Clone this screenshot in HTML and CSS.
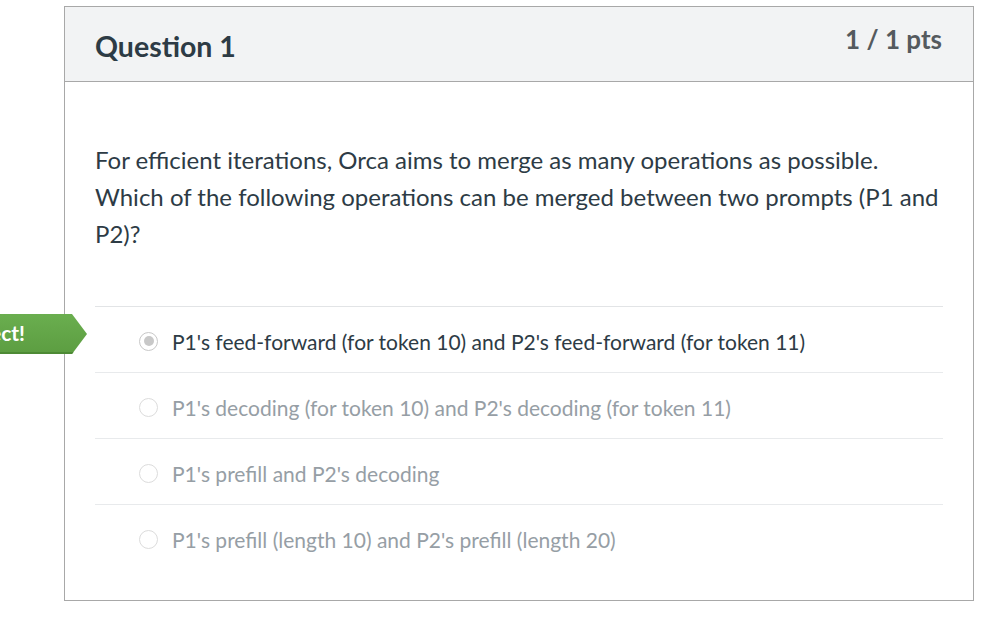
FILE: index.html
```html
<!DOCTYPE html>
<html lang="en">
<head>
<meta charset="utf-8">
<title>Question 1</title>
<link rel="stylesheet" href="styles.css">
</head>
<body>
<div class="page">
  <div class="answer-flag"><span>Correct!</span></div>
  <div class="card">
    <div class="card-header">
      <h2 class="title">Question 1</h2>
      <div class="pts">1 / 1 pts</div>
    </div>
    <div class="card-body">
      <p class="question">For efficient iterations, Orca aims to merge as many operations as possible. Which of the following operations can be merged between two prompts (P1 and P2)?</p>
      <div class="answers">
        <div class="answer selected"><span class="radio"></span><span class="label">P1's feed-forward (for token 10) and P2's feed-forward (for token 11)</span></div>
        <div class="answer"><span class="radio"></span><span class="label">P1's decoding (for token 10) and P2's decoding (for token 11)</span></div>
        <div class="answer"><span class="radio"></span><span class="label">P1's prefill and P2's decoding</span></div>
        <div class="answer"><span class="radio"></span><span class="label">P1's prefill (length 10) and P2's prefill (length 20)</span></div>
      </div>
    </div>
  </div>
</div>
</body>
</html>
```

FILE: styles.css
```css
html, body {
  margin: 0;
  padding: 0;
  background: #ffffff;
  font-family: Lato, "Liberation Sans", sans-serif;
  overflow: hidden;
}

.page {
  position: relative;
  padding: 6px 0 0 64px;
}

.card {
  width: 908px;
  height: 593px;
  border: 1px solid #a8a8a8;
  box-sizing: content-box;
}

.card-header {
  height: 74px;
  background: #f2f3f4;
  border-bottom: 1px solid #a8a8a8;
  display: flex;
  justify-content: space-between;
  align-items: flex-start;
  padding: 0 31px 0 30px;
}

.title {
  margin: 0;
  padding-top: 22px;
  font-size: 28.5px;
  line-height: 34px;
  font-weight: 700;
  color: #2d3b45;
}

.pts {
  padding-top: 17px;
  font-size: 26px;
  line-height: 30px;
  font-weight: 700;
  color: #555a5e;
}

.card-body {
  padding: 59px 30px 0 30px;
}

.question {
  margin: 0 0 54px 0;
  font-size: 24px;
  line-height: 37px;
  color: #2d3b45;
}

.answers {
  border-top: 1px solid #e2e4e6;
}

.answer {
  height: 62px;
  border-bottom: 1px solid #e8eaec;
  display: flex;
  align-items: center;
  padding-left: 44px;
  padding-top: 3px;
  box-sizing: content-box;
}

.answer:last-child {
  border-bottom: none;
}

.radio {
  width: 17px;
  height: 17px;
  border: 1px solid #dcdcdc;
  border-radius: 50%;
  box-sizing: content-box;
  margin-right: 14px;
  position: relative;
  background: #fff;
}

.answer.selected .radio {
  border-color: #c8c8c8;
}

.answer.selected .radio::after {
  content: "";
  position: absolute;
  left: 3.5px;
  top: 3.5px;
  width: 10px;
  height: 10px;
  border-radius: 50%;
  background: #c8c8c8;
}

.label {
  font-size: 21px;
  color: #969ea5;
}

.answer.selected .label {
  color: #2d3b45;
}

.answer-flag {
  position: absolute;
  left: -60px;
  top: 314px;
  width: 147px;
  height: 40px;
  background: linear-gradient(#6aae4f, #5c9d41);
  clip-path: polygon(0 0, 132px 0, 147px 20px, 132px 40px, 0 40px);
  box-shadow: inset 0 -2px 0 #4d8a35;
  color: #ffffff;
  font-weight: 700;
  font-size: 21px;
  line-height: 38px;
  text-align: right;
  box-sizing: border-box;
  padding-right: 62px;
}
```
